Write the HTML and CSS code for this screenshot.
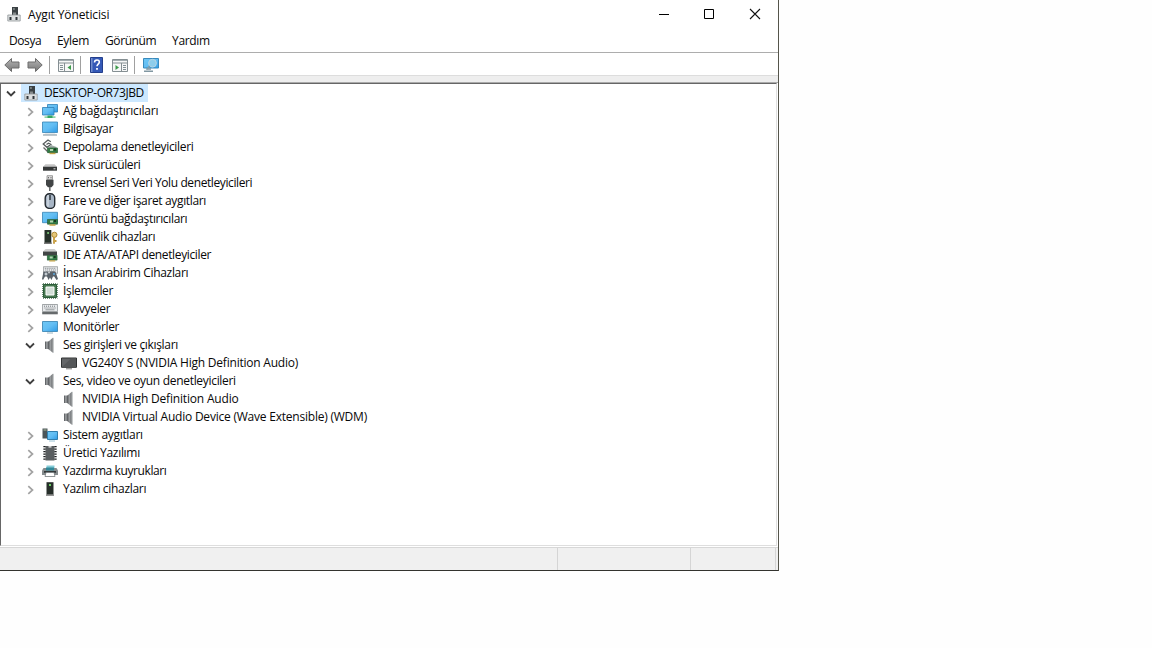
FILE: index.html
```html
<!DOCTYPE html>
<html lang="tr">
<head>
<meta charset="utf-8">
<title>Aygıt Yöneticisi</title>
<link rel="stylesheet" href="styles.css">
</head>
<body>
<svg class="defs" width="0" height="0">
<defs>
<linearGradient id="blue" x1="0" y1="0" x2="1" y2="1"><stop offset="0" stop-color="#6fc8f5"/><stop offset=".5" stop-color="#62bdf3"/><stop offset="1" stop-color="#2e9be6"/></linearGradient>
<linearGradient id="grey" x1="0" y1="0" x2="1" y2="0"><stop offset="0" stop-color="#4c4f52"/><stop offset=".45" stop-color="#9da0a2"/><stop offset="1" stop-color="#65686b"/></linearGradient>
<linearGradient id="arrow" x1="0" y1="0" x2="0" y2="1"><stop offset="0" stop-color="#b5b5b5"/><stop offset="1" stop-color="#777"/></linearGradient>
<symbol id="closed" viewBox="0 0 8 10"><path d="M1.3 1.2 5.5 5 1.3 8.8" fill="none" stroke="#a2a2a2" stroke-width="1.7"/></symbol>
<symbol id="open" viewBox="0 0 10 8"><path d="M1 1.5 5 5.5 9 1.5" fill="none" stroke="#3f3f3f" stroke-width="1.8"/></symbol>
<symbol id="root" viewBox="0 0 16 16"><path d="M6 1h6v8H6z" fill="#3b4144"/><path d="M7.2 2h1.5v2H7.2z" fill="#87908f"/><path d="M7 6.5h3v3H7z" fill="#858a8b"/><path d="M1.8 9h12.4v6H1.8z" fill="#dcdfe0" stroke="#92979a" stroke-width=".8"/><path d="M3.5 11h2v3h-2zM9.5 11h2v3h-2z" fill="#30363a"/></symbol>
<symbol id="network" viewBox="0 0 16 16"><path d="M5.5 1.5h10v7.5h-10z" fill="url(#blue)" stroke="#2f7fb5" stroke-width=".8"/><path d="M.5 4.5h11.5V12H.5z" fill="url(#blue)" stroke="#2f7fb5" stroke-width=".8"/><path d="M2.5 13.4h11v1.4h-11z" fill="#72ca91"/><path d="M5.5 12.5h5V15h-5z" fill="#35a763"/></symbol>
<symbol id="computer" viewBox="0 0 16 16"><path d="M.5 1h15v10.5H.5z" fill="url(#blue)" stroke="#3683b5" stroke-width=".8"/><path d="M3.5 12h9l1.5 1.8H2z" fill="#e5eaec"/><path d="M1 14h14" stroke="#7f929d"/></symbol>
<symbol id="card" viewBox="0 0 11 7"><path d="M.5.5h10v4.7H.5z" fill="#327b45" stroke="#285f37" stroke-width=".7"/><path d="M3 1.5h3v2H3z" fill="#b5d5b4"/><path d="M7 1h2v2H7z" fill="#183820"/><path d="M2.5 5.3h6v1.4h-6z" fill="#c4a346"/></symbol>
<symbol id="storage" viewBox="0 0 16 16"><path d="M8.8 2.8 6 1 1.2 5 5 8.3 8.8 5.4 6.5 4.2 4.5 5.5" fill="none" stroke="#555b5c" stroke-width="1.3"/><path d="m1.5 8.5 4 4" stroke="#666" stroke-width="1.3"/><path d="M6 8.5 9 6l5.5 2v6H6z" fill="#9eaaa5"/><use href="#card" x="5" y="8.2" width="11" height="7.5"/></symbol>
<symbol id="disk" viewBox="0 0 16 16"><path d="m3.5 7.2 9 .1 2.5 2.5H1z" fill="#c5c5c5"/><path d="M1 9.7h14v4H1z" fill="#363939"/><path d="M11.5 11.3h2v1h-2z" fill="#ddd"/></symbol>
<symbol id="usb" viewBox="0 0 16 16"><path d="M5 .7h5.5v4H5z" fill="#ddd" stroke="#888" stroke-width=".8"/><path d="M6 2.2h1v1H6zM8.5 2.2h1v1h-1z" fill="#444"/><path d="M4 4.7h7.5V10l-2 2.3H6L4 10z" fill="#414445"/><path d="M7 12h1.6v4H7z" fill="#686b6c"/></symbol>
<symbol id="mouse" viewBox="0 0 16 16"><rect x="3.2" y=".7" width="9.5" height="14.7" rx="4.2" fill="#a8b6c6" stroke="#252b31" stroke-width="1.4"/><path d="M6 2v11.7" stroke="#dbe2e9" stroke-width="1.2"/><path d="M8 2v5" stroke="#313941" stroke-width="1.5"/></symbol>
<symbol id="display" viewBox="0 0 16 16"><path d="M.5 1.3h15v10.4H.5z" fill="url(#blue)" stroke="#3683b5" stroke-width=".8"/><use href="#card" x="5" y="7.7" width="11" height="7.5"/></symbol>
<symbol id="security" viewBox="0 0 16 16"><path d="M2.5 1h6.8v13.5H2.5z" fill="#263129"/><path d="M5.2 3h1.8v2H5.2z" fill="#74b66e"/><path d="M2 13.5h7.7V15H2z" fill="#777"/><circle cx="12.4" cy="5.8" r="2.6" fill="#e5c779" stroke="#b28b34"/><path d="M12 8v6.7M13 12h1.5" stroke="#c69b3b" stroke-width="1.8"/></symbol>
<symbol id="ide" viewBox="0 0 16 16"><path d="m3.5 2 9 .1L15 4.6H1z" fill="#ccc"/><path d="M1 4.5h14v4.2H1z" fill="#424646"/><use href="#card" x="4.7" y="7.5" width="11" height="7.8"/></symbol>
<symbol id="keys" viewBox="0 0 16 8"><path d="M.4.5h15.2v7H.4z" fill="#e8eaec" stroke="#8c9093" stroke-width=".8"/><path d="M2 2.2h12M2.5 4h11" stroke="#747a7e" stroke-dasharray="1 1"/><path d="M3.5 5.8h9" stroke="#92979a"/></symbol>
<symbol id="hid" viewBox="0 0 16 16"><use href="#keys" x="1" y="1" width="15" height="8"/><path d="M1.5 6.5h4L7 9l1.5-2.5h5L16 14l-1.5 1-2.3-3.5H11L9.5 15 8 12.5 6.5 15 5 11.5H3L1 15l-1-1z" fill="#596169"/><path d="M2.5 9h3M4 7.5v3" stroke="#e6edf2"/><path d="M11 9h2" stroke="#5ba9de" stroke-width="1.5"/></symbol>
<symbol id="cpu" viewBox="0 0 16 16"><path d="M1.5 1.5h13v13h-13z" fill="#477850" stroke="#2d5d3a"/><path d="M1 .8h14.5M1 15.2h14.5M.8 1v14M15.2 1v14" stroke="#315e3c" stroke-dasharray="1 1"/><path d="M4 4h8v8H4z" fill="#d3dfd7" stroke="#fff"/></symbol>
<symbol id="keyboard" viewBox="0 0 16 16"><use href="#keys" x="0" y="3" width="16" height="8"/><path d="M.2 11h15.6v2.3H.2z" fill="#666a6c"/></symbol>
<symbol id="monitor" viewBox="0 0 16 16"><path d="M.5 2.5h15v10H.5z" fill="url(#blue)" stroke="#327fae" stroke-width=".8"/><path d="M5 14h6" stroke="#9bb4c1"/></symbol>
<symbol id="speaker" viewBox="0 0 16 16"><path d="M3 4.5h3.8v7.5H3z" fill="url(#grey)"/><path d="M6.2 4.7 10.8.8v15L6.2 12z" fill="url(#grey)"/><path d="M11.3.8v15" stroke="#b9bdbf"/></symbol>
<symbol id="screen" viewBox="0 0 16 16"><path d="M.5 3h15v9.3H.5z" fill="#646668" stroke="#303233"/><path d="M1 12 10 3.5h5V12z" fill="#555759"/><path d="M5 13.8h6" stroke="#777"/></symbol>
<symbol id="system" viewBox="0 0 16 16"><path d="M.5 1.5h5v10h-5z" fill="#4b5559"/><path d="M1.5 3h3" stroke="#a8ba9a"/><path d="M5.5 4.5h10v8h-10z" fill="url(#blue)" stroke="#327fae"/><path d="M7 14h6" stroke="#9cc4d6"/></symbol>
<symbol id="firmware" viewBox="0 0 16 16"><path d="M3.5 1h9v14.5h-9z" fill="#5a5e60"/><path d="M2.5 1v14M13.5 1v14" stroke="#1d1f20" stroke-width="2.3" stroke-dasharray="1.3 1.2"/><path d="M6.5 1h3v1.7h-3z" fill="#ccc"/></symbol>
<symbol id="printer" viewBox="0 0 16 16"><path d="M4.5 2.5h8V7h-8z" fill="#85ccd8"/><path d="M1.5 5h13L16 7.5V12H0V7.5z" fill="#858b8d"/><path d="M4 4.5h8v3H4z" fill="#308899"/><path d="M2 8h12v1.8H2z" fill="#343a3b"/><path d="M4 9.5h8l1 4H3z" fill="#fff" stroke="#737a7c" stroke-width=".8"/></symbol>
<symbol id="software" viewBox="0 0 16 16"><path d="M4.5 1.2h7v12.6h-7z" fill="#272f2a"/><path d="M7 3h2v2H7z" fill="#6ace65"/><path d="M4 13.4h8v1.5H4z" fill="#888"/></symbol>
<symbol id="back" viewBox="0 0 16 16"><path d="M.8 8 7.5 1.5V5H15v6H7.5v3.5z" fill="url(#arrow)" stroke="#6d6d6d"/></symbol>
<symbol id="panel" viewBox="0 0 16 16"><path d="M.5 2.5h15v12H.5z" fill="#f6f7f7" stroke="#858f93"/><path d="M1 3.5h14" stroke="#a3adb1"/><path d="M1 6h14M6.5 6v8.5" stroke="#858f93"/><path d="M2 8.5h3M2 10.5h3M2 12.5h3" stroke="#839096"/></symbol>
</defs>
</svg>
<main class="window">
<header class="titlebar">
<svg class="icon"><use href="#root"/></svg><h1 class="title">Aygıt Yöneticisi</h1>
<svg class="controls" viewBox="0 0 104 14"><path d="M1 7.5h10M46.5 2.5h9v9h-9z" fill="none" stroke="#000"/><path d="m92 2 10 10M102 2 92 12" stroke="#111" stroke-width="1.1"/></svg>
</header>
<nav class="menu"><span class="m1">Dosya</span><span class="m2">Eylem</span><span class="m3">Görünüm</span><span class="m4">Yardım</span></nav>
<div class="toolbar">
<svg class="icon"><use href="#back"/></svg>
<svg class="icon forward"><use href="#back"/></svg>
<i class="sep sep-nav"></i>
<svg class="icon tool-panel"><use href="#panel"/><path d="M13 8v5l-3.5-2.5z" fill="#3d9b4b"/></svg>
<i class="sep sep-panel"></i>
<svg class="icon help" viewBox="0 0 16 16"><path d="M1.5.5h12v15h-12z" fill="#3559b7" stroke="#243f8c"/><path d="M2 1h1.5v14H2z" fill="#738fce"/><path d="M5.5 5.5c0-3.5 5-3.2 4.8-.4-.1 1.9-2.3 2.1-2.3 4.2" fill="none" stroke="#fff" stroke-width="1.6"/><path d="M7.1 11h1.8v1.8H7.1z" fill="#fff"/></svg>
<svg class="icon tool-run" viewBox="0 0 16 16"><path d="M.5 2.5h15v12H.5z" fill="#f6f7f7" stroke="#858f93"/><path d="M1 3.5h14" stroke="#a3adb1"/><path d="M1 6h14M9.5 6v8.5" stroke="#858f93"/><path d="M11 8.5h3M11 10.5h3M11 12.5h3" stroke="#839096"/><path d="M3.5 8v5L7 10.5z" fill="#3d9b4b"/></svg>
<i class="sep sep-run"></i>
<svg class="icon scan" viewBox="0 0 16 16"><path d="M.5 1.5h15V11H.5z" fill="url(#blue)" stroke="#398abc"/><path d="M1 14.3h9M4 12h4" stroke="#8197a2" stroke-width="1.4"/><circle cx="9.5" cy="6.2" r="3.9" fill="#8dcdeb" stroke="#b5d5e5"/><path d="m6.8 9-3.5 3.5" stroke="#7c9eae" stroke-width="1.7"/></svg>
</div>
<div class="band"></div>
<section class="tree">
<div class="row"><svg class="chev open"><use href="#open"/></svg><div class="selected"><svg class="icon"><use href="#root"/></svg><span class="label t0">DESKTOP-OR73JBD</span></div></div>
<div class="row child"><svg class="chev"><use href="#closed"/></svg><svg class="icon"><use href="#network"/></svg><span class="label t1">Ağ bağdaştırıcıları</span></div>
<div class="row child"><svg class="chev"><use href="#closed"/></svg><svg class="icon"><use href="#computer"/></svg><span class="label t2">Bilgisayar</span></div>
<div class="row child"><svg class="chev"><use href="#closed"/></svg><svg class="icon"><use href="#storage"/></svg><span class="label t3">Depolama denetleyicileri</span></div>
<div class="row child"><svg class="chev"><use href="#closed"/></svg><svg class="icon"><use href="#disk"/></svg><span class="label t4">Disk sürücüleri</span></div>
<div class="row child"><svg class="chev"><use href="#closed"/></svg><svg class="icon"><use href="#usb"/></svg><span class="label t5">Evrensel Seri Veri Yolu denetleyicileri</span></div>
<div class="row child"><svg class="chev"><use href="#closed"/></svg><svg class="icon"><use href="#mouse"/></svg><span class="label t6">Fare ve diğer işaret aygıtları</span></div>
<div class="row child"><svg class="chev"><use href="#closed"/></svg><svg class="icon"><use href="#display"/></svg><span class="label t7">Görüntü bağdaştırıcıları</span></div>
<div class="row child"><svg class="chev"><use href="#closed"/></svg><svg class="icon"><use href="#security"/></svg><span class="label t8">Güvenlik cihazları</span></div>
<div class="row child"><svg class="chev"><use href="#closed"/></svg><svg class="icon"><use href="#ide"/></svg><span class="label t9">IDE ATA/ATAPI denetleyiciler</span></div>
<div class="row child"><svg class="chev"><use href="#closed"/></svg><svg class="icon"><use href="#hid"/></svg><span class="label t10">İnsan Arabirim Cihazları</span></div>
<div class="row child"><svg class="chev"><use href="#closed"/></svg><svg class="icon"><use href="#cpu"/></svg><span class="label t11">İşlemciler</span></div>
<div class="row child"><svg class="chev"><use href="#closed"/></svg><svg class="icon"><use href="#keyboard"/></svg><span class="label t12">Klavyeler</span></div>
<div class="row child"><svg class="chev"><use href="#closed"/></svg><svg class="icon"><use href="#monitor"/></svg><span class="label t13">Monitörler</span></div>
<div class="row child"><svg class="chev open"><use href="#open"/></svg><svg class="icon"><use href="#speaker"/></svg><span class="label t14">Ses girişleri ve çıkışları</span></div>
<div class="row leaf"><svg class="icon"><use href="#screen"/></svg><span class="label t15">VG240Y S (NVIDIA High Definition Audio)</span></div>
<div class="row child"><svg class="chev open"><use href="#open"/></svg><svg class="icon"><use href="#speaker"/></svg><span class="label t16">Ses, video ve oyun denetleyicileri</span></div>
<div class="row leaf"><svg class="icon"><use href="#speaker"/></svg><span class="label t17">NVIDIA High Definition Audio</span></div>
<div class="row leaf"><svg class="icon"><use href="#speaker"/></svg><span class="label t18">NVIDIA Virtual Audio Device (Wave Extensible) (WDM)</span></div>
<div class="row child"><svg class="chev"><use href="#closed"/></svg><svg class="icon"><use href="#system"/></svg><span class="label t19">Sistem aygıtları</span></div>
<div class="row child"><svg class="chev"><use href="#closed"/></svg><svg class="icon"><use href="#firmware"/></svg><span class="label t20">Üretici Yazılımı</span></div>
<div class="row child"><svg class="chev"><use href="#closed"/></svg><svg class="icon"><use href="#printer"/></svg><span class="label t21">Yazdırma kuyrukları</span></div>
<div class="row child"><svg class="chev"><use href="#closed"/></svg><svg class="icon"><use href="#software"/></svg><span class="label t22">Yazılım cihazları</span></div>
</section>
<footer class="status"><div class="pane main"></div><div class="pane mid"></div><div class="pane end"></div></footer>
</main>
</body>
</html>
```
FILE: styles.css
```css
* { box-sizing: border-box; }
body { margin: 0; background: #fefefe; color: #080808; font: 12px/18px "Open Sans", "Noto Sans", sans-serif; letter-spacing: -.33px; }
.defs { position: absolute; }
.window { width: 779px; height: 571px; display: flex; flex-direction: column; background: #fff; border-right: 1px solid #55554b; border-bottom: 1px solid #33332e; }
.titlebar { height: 30px; display: flex; align-items: center; padding: 0 16px 2px 6px; }
.title { margin: 1px 0 0 6px; font-size: inherit; font-weight: 400; letter-spacing: -.13px; }
.controls { width: 104px; height: 14px; margin-left: auto; }
.menu { height: 23px; display: flex; padding: 2px 0 0 9px; border-bottom: 1px solid #adadad; }
.m1 { width: 48px; letter-spacing: -.42px; }
.m2 { width: 48px; }
.m3 { width: 67px; letter-spacing: -.4px; }
.toolbar { height: 23px; display: flex; align-items: center; padding: 1px 0 0 4px; border-bottom: 1px solid #ddd; }
.icon { width: 16px; height: 16px; flex: none; display: block; }
.forward { margin-left: 7px; transform: scaleX(-1); }
.sep { width: 1px; height: 18px; background: #a0a0a0; }
.sep-nav { margin-left: 6px; }
.tool-panel { margin-left: 8px; }
.sep-panel { margin-left: 6px; }
.help { margin-left: 8px; }
.tool-run { margin-left: 7px; }
.sep-run { margin-left: 6px; }
.scan { margin-left: 8px; }
.band { height: 7px; background: #eee; border-bottom: 1px solid #aaa; }
.tree { flex: 1; margin-right: 1px; border: solid; border-width: 1px; border-color: #666 #e0e0e0 #dedede #666; }
.row { height: 18px; display: flex; align-items: center; padding-left: 6px; }
.child { padding-left: 26px; }
.leaf { padding-left: 60px; }
.chev { width: 8px; height: 10px; margin: 2px 7px 0 0; flex: none; }
.chev.open { width: 10px; height: 8px; margin: 1px 7px 0 -2px; }
.row:first-child .open { margin: 2px 5px 0 -1px; }
.selected { height: 18px; width: 127px; display: flex; align-items: center; padding-left: 2px; background: #cce8ff; }
.label { margin-left: 5px; white-space: nowrap; }
.t0 { letter-spacing: -.45px; }
.t1 { letter-spacing: -.2px; }
.t4 { letter-spacing: -.38px; }
.t5, .t21 { letter-spacing: -.4px; }
.t6, .t9, .t12 { letter-spacing: -.36px; }
.t8, .t16, .t19, .t20, .t22 { letter-spacing: -.31px; }
.t15, .t18 { letter-spacing: -.22px; }
.t17 { letter-spacing: -.18px; }
.status { height: 23px; margin-top: 1px; display: flex; background: #f0f0f0; border-top: 1px solid #d7d7d7; }
.pane { border-right: 1px solid #d5d5d5; }
.main { width: 558px; }
.mid { width: 133px; }
.end { width: 85px; }
```
